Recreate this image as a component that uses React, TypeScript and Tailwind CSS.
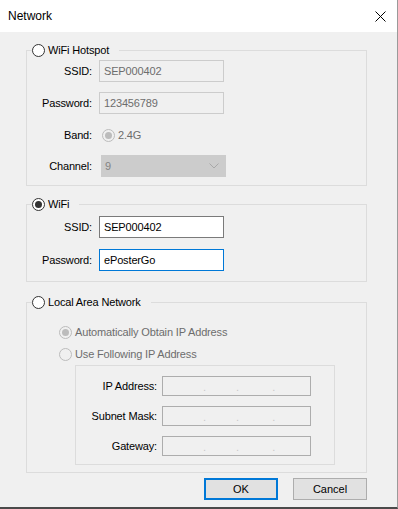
import React from 'react';

const FONT = { fontFamily: '"Liberation Sans", Arial, sans-serif' };

type RadioProps = { checked?: boolean; disabled?: boolean };

const Radio = ({ checked, disabled }: RadioProps) => (
  <span
    className={
      disabled
        ? 'flex h-[13px] w-[13px] shrink-0 items-center justify-center rounded-full border border-[#bcbcbc] bg-[#f0f0f0]'
        : 'flex h-[13px] w-[13px] shrink-0 items-center justify-center rounded-full border border-[#333333] bg-white'
    }
  >
    {checked && (
      <span
        className={
          disabled ? 'h-[7px] w-[7px] rounded-full bg-[#bcbcbc]' : 'h-[7px] w-[7px] rounded-full bg-[#333333]'
        }
      />
    )}
  </span>
);

const GroupLegend = ({ label, checked }: { label: string; checked?: boolean }) => (
  <legend className="ml-[5px] flex h-[16px] items-center gap-[3px] pr-[10px]">
    <Radio checked={checked} />
    <span className="text-[11px] leading-[16px] tracking-[-0.15px] text-black">{label}</span>
  </legend>
);

const Field = ({ label, children }: { label: string; children: React.ReactNode }) => (
  <div className="flex h-[22px] items-center">
    <span className="w-[65px] text-right text-[11px] tracking-[-0.15px] text-black">{label}</span>
    <div className="ml-[7px] flex h-full items-center">{children}</div>
  </div>
);

const IpRow = ({ label }: { label: string }) => (
  <div className="flex h-[20px] items-center">
    <span className="w-[81px] text-right text-[11px] tracking-[-0.15px] text-black">{label}</span>
    <div className="ml-[5px] flex h-[20px] w-[149px] items-end border border-[#adadad] bg-[#f0f0f0] pb-[1px] text-[11px] leading-[14px] text-[#c8c8c8]">
      <span className="w-[40px]" />
      <span>.</span>
      <span className="w-[30px]" />
      <span>.</span>
      <span className="w-[33px]" />
      <span>.</span>
    </div>
  </div>
);

export default function App() {
  return (
    <div
      style={FONT}
      className="flex h-[509px] w-[398px] flex-col border-r border-b-2 border-r-[#9a9a9a] border-b-[#4a4a4a] bg-[#f0f0f0]"
    >
      {/* title bar */}
      <div className="flex h-[32px] shrink-0 items-center justify-between bg-white pl-[8px] pr-[10px]">
        <span className="text-[12px] text-black">Network</span>
        <svg width="11" height="11" viewBox="0 0 11 11" className="mr-[1px]">
          <path d="M0.5 0.5 L10.5 10.5 M10.5 0.5 L0.5 10.5" stroke="#000" strokeWidth="1" fill="none" />
        </svg>
      </div>

      {/* WiFi Hotspot */}
      <fieldset className="ml-[26px] mt-[10px] w-[341px] border border-[#dcdcdc] pb-[8px] pt-[2px]">
        <GroupLegend label="WiFi Hotspot" />
        <div className="flex flex-col">
          <Field label="SSID:">
            <div className="flex h-[22px] w-[125px] items-center border border-[#cccccc] bg-[#f0f0f0] px-[4px] text-[11px] tracking-[-0.15px] text-[#6d6d6d]">
              SEP000402
            </div>
          </Field>
          <div className="mt-[10px]">
            <Field label="Password:">
              <div className="flex h-[22px] w-[125px] items-center border border-[#cccccc] bg-[#f0f0f0] px-[4px] text-[11px] tracking-[-0.15px] text-[#6d6d6d]">
                123456789
              </div>
            </Field>
          </div>
          <div className="mt-[10px]">
            <Field label="Band:">
              <div className="ml-[3px] flex items-center gap-[3px]">
                <Radio checked disabled />
                <span className="text-[11px] tracking-[-0.15px] text-[#6d6d6d]">2.4G</span>
              </div>
            </Field>
          </div>
          <div className="mt-[9px]">
            <Field label="Channel:">
              <div className="ml-[2px] flex h-[22px] w-[125px] items-center justify-between border border-[#cccccc] bg-[#cccccc] pl-[3px] pr-[6px] text-[11px] text-[#838383]">
                <span>9</span>
                <svg width="10" height="6" viewBox="0 0 10 6">
                  <path d="M0.5 0.5 L5 5 L9.5 0.5" stroke="#a8a8a8" strokeWidth="1" fill="none" />
                </svg>
              </div>
            </Field>
          </div>
        </div>
      </fieldset>

      {/* WiFi */}
      <fieldset className="ml-[26px] mt-[10px] w-[341px] border border-[#dcdcdc] pb-[10px] pt-[4px]">
        <GroupLegend label="WiFi" checked />
        <div className="flex flex-col">
          <Field label="SSID:">
            <div className="flex h-[22px] w-[125px] items-center border border-[#7a7a7a] bg-white px-[4px] text-[11px] tracking-[-0.15px] text-black">
              SEP000402
            </div>
          </Field>
          <div className="mt-[11px]">
            <Field label="Password:">
              <div className="flex h-[22px] w-[125px] items-center border border-[#0078d7] bg-white px-[4px] text-[11px] tracking-[-0.15px] text-black">
                ePosterGo
              </div>
            </Field>
          </div>
        </div>
      </fieldset>

      {/* Local Area Network */}
      <fieldset className="ml-[26px] mt-[12px] w-[341px] border border-[#dcdcdc] pb-[7px] pt-[14px]">
        <GroupLegend label="Local Area Network" />
        <div className="flex flex-col">
          <div className="ml-[32px] flex h-[16px] items-center gap-[3px]">
            <Radio checked disabled />
            <span className="text-[11px] tracking-[-0.15px] text-[#6d6d6d]">Automatically Obtain IP Address</span>
          </div>
          <div className="ml-[32px] mt-[6px] flex h-[16px] items-center gap-[3px]">
            <Radio disabled />
            <span className="text-[11px] tracking-[-0.15px] text-[#6d6d6d]">Use Following IP Address</span>
          </div>
          <div className="ml-[48px] mt-[3px] flex w-[260px] flex-col gap-[10px] border border-[#dcdcdc] pb-[8px] pt-[10px]">
            <IpRow label="IP Address:" />
            <IpRow label="Subnet Mask:" />
            <IpRow label="Gateway:" />
          </div>
        </div>
      </fieldset>

      {/* buttons */}
      <div className="ml-[204px] mt-[5px] flex gap-[15px]">
        <button className="flex h-[22px] w-[74px] items-center justify-center border-2 border-[#0078d7] bg-[#e1e1e1] text-[11px] text-black">
          OK
        </button>
        <button className="flex h-[22px] w-[74px] items-center justify-center border border-[#adadad] bg-[#e1e1e1] text-[11px] text-black">
          Cancel
        </button>
      </div>
    </div>
  );
}
